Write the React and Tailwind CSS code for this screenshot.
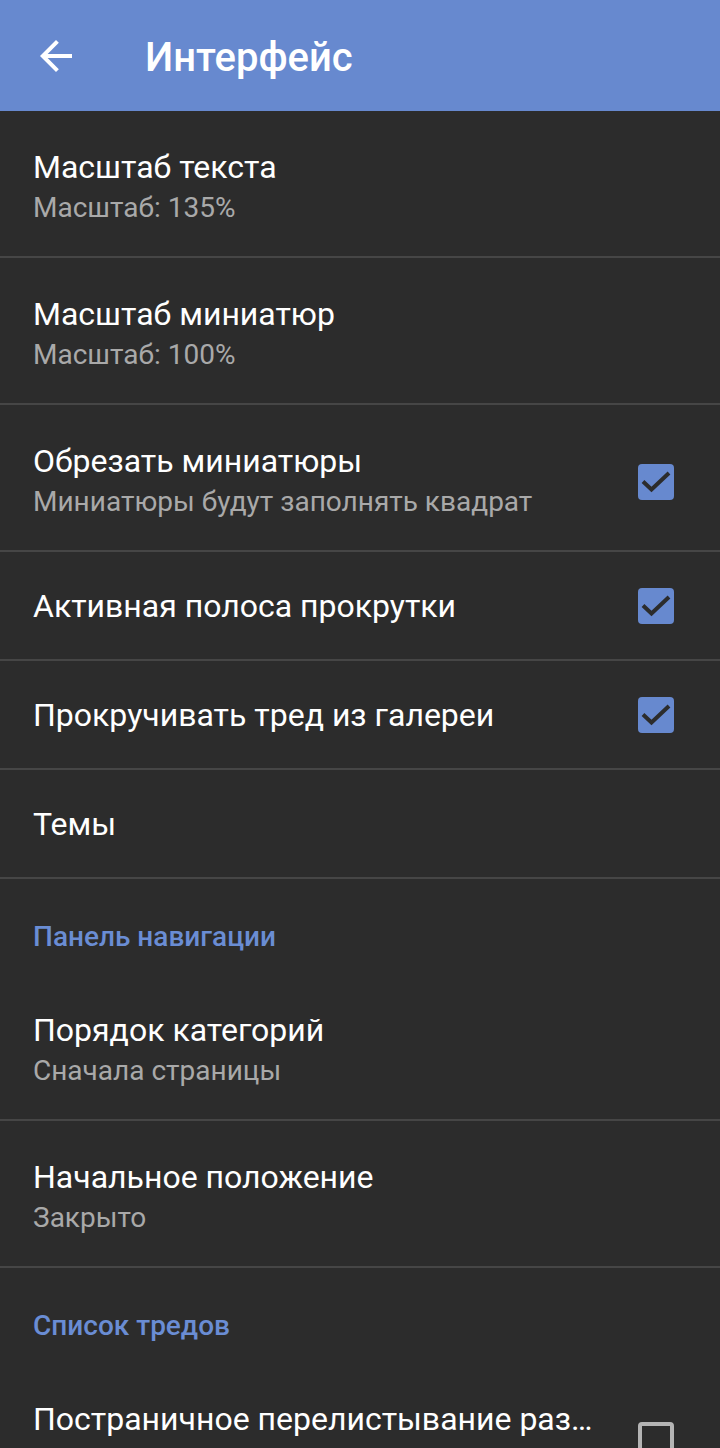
import React from "react";

const rows = [
  { type: "item", title: "Масштаб текста", summary: "Масштаб: 135%" },
  { type: "item", title: "Масштаб миниатюр", summary: "Масштаб: 100%" },
  { type: "item", title: "Обрезать миниатюры", summary: "Миниатюры будут заполнять квадрат", checked: true },
  { type: "item", title: "Активная полоса прокрутки", checked: true },
  { type: "item", title: "Прокручивать тред из галереи", checked: true },
  { type: "item", title: "Темы", last: true },
  { type: "category", title: "Панель навигации" },
  { type: "item", title: "Порядок категорий", summary: "Сначала страницы" },
  { type: "item", title: "Начальное положение", summary: "Закрыто", last: true },
  { type: "category", title: "Список тредов" },
  { type: "item", title: "Постраничное перелистывание разделов", summary: "Загружать следующую страницу", checked: false },
];

const Checkbox = ({ checked }) =>
  checked ? (
    <div className="w-[36px] h-[36px] rounded-[4px] bg-[#6789cf]">
      <svg width="36" height="36" viewBox="0 0 36 36">
        <path d="M5 17.5l8.5 8 17.5-16.5" fill="none" stroke="#2c2c2c" strokeWidth="4" />
      </svg>
    </div>
  ) : (
    <div className="w-[36px] h-[36px] rounded-[4px] border-[4px] border-[#b4b4b4]" />
  );

const Item = ({ title, summary, checked }) => (
  <div
    className={
      "flex items-center pl-[33px] pr-[46px] " +
      (summary ? "pt-[36px] pb-[27px]" : "h-[107px]")
    }
  >
    <div className="flex-1 min-w-0 mr-[32px]">
      <div className="text-[32px] leading-[40px] text-white truncate">{title}</div>
      {summary && (
        <div className="text-[28px] leading-[42px] text-[#a9a9a9] truncate">{summary}</div>
      )}
    </div>
    {checked !== undefined && <Checkbox checked={checked} />}
  </div>
);

export default function App() {
  return (
    <div className="w-[720px] h-[1448px] overflow-hidden bg-[#2c2c2c] font-['Roboto',sans-serif]">
      <div className="h-[111px] bg-[#6789cf] flex items-center">
        <svg width="48" height="48" viewBox="0 0 24 24" className="ml-[32px]">
          <path
            d="M20 11H7.83l5.59-5.59L12 4l-8 8 8 8 1.41-1.41L7.83 13H20v-2z"
            fill="#ffffff"
          />
        </svg>
        <div className="ml-[65px] text-[40px] font-medium text-white leading-none mt-[4px]">
          Интерфейс
        </div>
      </div>
      {rows.map((r, i) => {
        if (r.type === "category") {
          return (
            <div
              key={i}
              className="pl-[33px] pt-[42px] pb-[21px] text-[28px] leading-[32px] font-medium text-[#6a8dd4]"
            >
              {r.title}
            </div>
          );
        }
        const next = rows[i + 1];
        return (
          <div key={i}>
            <Item {...r} />
            {next && <div className="h-[2px] bg-[#464646]" />}
          </div>
        );
      })}
    </div>
  );
}
